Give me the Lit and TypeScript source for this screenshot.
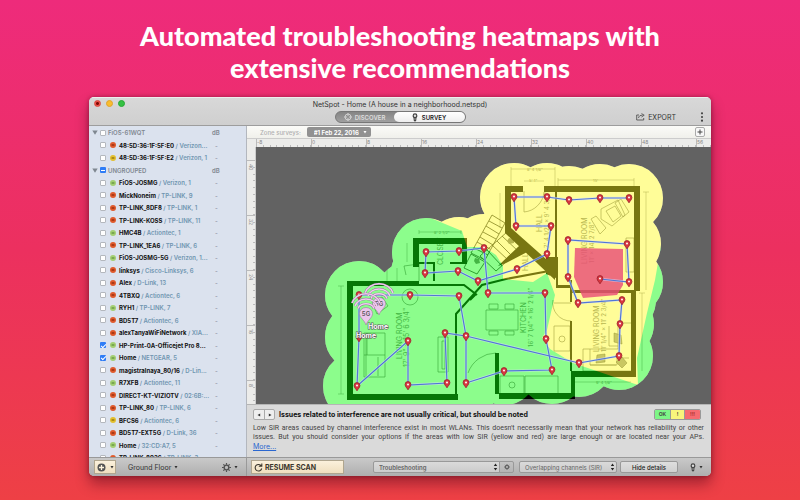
import { LitElement, html, css, svg } from "lit";
import { customElement } from "lit/decorators.js";

type Status = "bad" | "warn" | "good";
interface Network { name: string; vendor: string; status: Status; checked?: boolean }
interface Group { title: string; mixed?: boolean; items: Network[] }

const n = (name: string, vendor: string, status: Status, checked = false): Network => ({ name, vendor, status, checked });

const GROUPS: Group[] = [
  { title: "FiOS-61WQT", items: [
    n("48:5D:36:1F:5F:E0", "Verizon...", "bad"),
    n("48:5D:36:1F:5F:E2", "Verizon, 1", "warn"),
  ] },
  { title: "UNGROUPED", mixed: true, items: [
    n("FiOS-JOSMG", "Verizon, 1", "good"),
    n("MickNoneim", "TP-LINK, 9", "bad"),
    n("TP-LINK_8DF8", "TP-LINK, 1", "bad"),
    n("TP-LINK-KOSS", "TP-LINK, 11", "bad"),
    n("HMC4B", "Actiontec, 1", "good"),
    n("TP-LINK_1EA6", "TP-LINK, 6", "bad"),
    n("FiOS-JOSMG-5G", "Verizon, 1...", "good"),
    n("linksys", "Cisco-Linksys, 6", "bad"),
    n("Alex", "D-Link, 13", "bad"),
    n("4TBXQ", "Actiontec, 6", "bad"),
    n("RYH1", "TP-LINK, 7", "good"),
    n("BD5T7", "Actiontec, 6", "bad"),
    n("alexTanyaWiFiNetwork", "XIA...", "bad"),
    n("HP-Print-0A-Officejet Pro 8...", "", "good", true),
    n("Home", "NETGEAR, 5", "good", true),
    n("magistralnaya_80/16", "D-Lin...", "bad"),
    n("R7XFB", "Actiontec, 11", "good"),
    n("DIRECT-KT-VIZIOTV", "02:6B:...", "bad"),
    n("TP-LINK_80", "TP-LINK, 6", "bad"),
    n("BFCS6", "Actiontec, 6", "warn"),
    n("BD5T7-EXT5G", "D-Link, 36", "bad"),
    n("Home", "32:CD:A7, 5", "good"),
    n("TP-LINK_8926", "TP-LINK, 3", "bad"),
  ] },
];

const PINS: [number, number][] = [
  [359, 295], [410, 295], [459, 296], [466, 336], [445, 333], [447, 383], [408, 385], [408, 341], [357, 386], [359, 337],
  [466, 383], [504, 371], [552, 370], [546, 339], [545, 293], [488, 293], [484, 248], [459, 251], [426, 252], [425, 273],
  [458, 271], [478, 281], [517, 269], [547, 254], [551, 226], [516, 226], [514, 197], [547, 197], [569, 200], [600, 198],
  [629, 198], [579, 363], [619, 356], [620, 324], [622, 300], [578, 303], [568, 277], [568, 240], [627, 244], [629, 282], [600, 279],
];

const AREA = "M359 295 426 252 484 248 514 197 629 198 629 282 620 324 619 356 579 363 552 370 504 371 466 383 357 386Z";
const ROUTE =
  "M359 337V295L410 295 459 296 466 336 445 333 447 383 408 385 408 341 357 386 359 337" +
  "M466 336V383L504 371 552 370 546 339 545 293 488 293 484 248 459 251 426 252 425 273 458 271 478 281 517 269 547 254 551 226 516 226 514 197 547 197 569 200 600 198 629 198" +
  "M466 336 579 363 619 356 620 324 622 300 578 303 568 277 568 240 627 244 629 282 600 279";

const YELLOW = "M433 160 433 219 462 231 467 247 484 247 496 255 503 266 503 279 533 282 547 273 555 295 547 330 542 338 550 349 573 363 638 385 637 358 647 313 655 280 662 240 668 200 668 160Z";
const RED = "M575 248 623 249 623 285 617 295 583 298 574 277Z";

const WALLS =
  "M347 281H419V286H353V394H458V400H347Z" +
  "M413 238H467V264H462V244H419V267H413Z" +
  "M505 186H523V192H511V228L555 267V280L505 233Z" +
  "M544 186H640V291H636V377H575V399H499V393H571V371H631V293H571V290H634V192H544Z" +
  "M495 353H499V394H495Z" +
  "M498 266 519 246 533 249 506 263Z" +
  "M546 257H558V285H571V288H556V278L546 274Z";
const THIN =
  "M419 285H464L477 295M456 394V314L482 285 506 279 549 271M419 263H434V281M450 263H463M556 192V258M571 280V302M571 321V371M470 300 476 294";

const FURNITURE =
  "M364 333h21v44h-21zM366 334v42M364 355h21M367 333v22M378 357v19" +
  "M438 337h10v35h-10zM442 341h3v28h-3z" +
  "M372 302 382 297 388 306 377 314Z" +
  "M486 310h32v20h-32zM489 304h9v5h-9zM505 304h9v5h-9zM489 331h9v4h-9zM505 331h9v4h-9z" +
  "M500 376h24v18h-24zM525 376h33v18h-33zM496 353a30 30 0 0 0-28 20" +
  "M554 326h16v25h-16zM554 303h17M553 300a18 18 0 0 0 18 21" +
  "M601 209 618 200 625 215 612 226 601 219ZM615 203l6-4 8 13-6 5zM591 219l5-3 10 12-6 6zM606 211l9-5 6 10-8 6z" +
  "M626 238h8v34h-8zM524 191v21a22 22 0 0 0 20-20" +
  "M583 349h35V323h14v48h-49zM590 349v16h26M609 326v20h9M590 365h27v-7h12M406 275l-2-9 15-2v17";

const STAIRS =
  "M492 215 505 223 485 260 471 253ZM489 221l13 7M486 226l13 8M483 232l13 7M480 237l13 8M477 242l13 7M474 248l14 7" +
  "M507 232 523 247 496 271 480 256ZM502 236l16 15M497 241l15 15M492 245l16 15M487 250l15 16M471 254l14 8-8 12-13-6z";

const STAIR_MARKS = "M475 258l4 1 1 4-4 1-2-3zM509 238l5 1 0 4-5 1-2-3z";

const DIMENSIONS =
  "M341 286V394M338 286h6M338 394h6M419 232H461M419 230v4M461 230v4M407 243V262M387 265v16M397 268v14" +
  "M511 169H555M511 167v20M555 167v20M524 181H544M558 180H634M558 178v12M634 178v12M500 193V228M646 192V290M643 192h6M642 293V371M639 293h6M575 382H631M353 405H455";

const WAVES = "M-8-5.500a8.500 7 0 0 1 16 0M-11-8a11.500 10 0 0 1 22 0M-14-11a14.500 12.500 0 0 1 28 0";

@customElement("app-root")
export class AppRoot extends LitElement {
  static styles = css`
    * { box-sizing: border-box; }
    :host {
      display: block;
      box-sizing: border-box;
      min-height: 100vh;
      padding: 20px 89px 24px;
      background: linear-gradient(180deg, #ee2b7b 0%, #ec305f 50%, #ee4045 100%);
      font-family: Inter, "Liberation Sans", sans-serif;
      font-size: 7px;
      line-height: 9px;
      color: #333;
    }
    button, select { font: inherit; color: inherit; margin: 0; padding: 0; border: 0; background: none; }
    h1 {
      margin: 0 0 13px;
      color: #fff;
      font: 900 27px/32px Lato, "Open Sans", sans-serif;
      text-align: center;
      white-space: nowrap;
    }
    .window {
      border-radius: 5px;
      overflow: hidden;
      background: #d9d9d9;
      box-shadow: 0 8px 14px rgba(60, 0, 20, 0.42), 0 0 4px rgba(60, 0, 20, 0.4);
    }
    .titlebar {
      display: grid;
      grid-template-columns: 1fr auto 1fr;
      height: 29px;
      padding: 2px 5px;
      background: linear-gradient(#d8d8d8, #cfcfcf);
      border-top: 1px solid #eee;
      border-bottom: 1px solid #9d9d9d;
    }
    .lights { display: flex; gap: 5px; }
    .light { width: 7px; height: 7px; border-radius: 50%; background: #f9bd2e; border: 1px solid #e0a32c; }
    .light.close { background: radial-gradient(#7c0906 1px, #ee544c 2px); border-color: #d9453c; }
    .light.zoom { background: #35c143; border-color: #28a835; }
    .middle { display: flex; flex-direction: column; align-items: center; gap: 2px; }
    .title { color: #333; }
    .segments { display: flex; height: 12px; border-radius: 6px; background: linear-gradient(#858585, #a0a0a0); border: 1px solid #777; }
    .segments button { display: flex; align-items: center; justify-content: center; gap: 3px; width: 58px; color: #ddd; font-weight: 600; font-size: 6px; }
    .segments button.on { width: 71px; border-radius: 5px; background: linear-gradient(#fff, #eee); color: #222; gap: 4px; }
    .tools { display: flex; justify-content: flex-end; align-items: center; gap: 22px; padding-top: 11px; }
    .tools button { display: flex; align-items: center; gap: 3px; }

    .body { display: grid; grid-template-columns: 158px minmax(0, 1fr); }
    .sidebar { contain: size; overflow: hidden; background: #dbe2ee; border-right: 1px solid #b3b7be; }
    .row { display: flex; align-items: center; height: 13px; padding-left: 11px; font-size: 6px; }
    .row:nth-child(even) { height: 12px; }
    .row.group { padding-left: 3px; color: #7f8790; font-weight: 600; }
    .fold { width: 6px; height: 6px; margin-right: 2px; display: flex; align-items: center; }
    .group label { margin-left: 2px; flex: 1; }
    .box { appearance: none; flex: none; width: 6px; height: 6px; margin: 0; border: 1px solid #b4b8be; border-radius: 1px; background: #fff; }
    .box:checked, .box:indeterminate { border: 0; background: #2f7df6; display: grid; place-items: center; }
    .box:checked::after { content: ""; width: 2px; height: 4px; border: solid #fff; border-width: 0 1px 1px 0; transform: rotate(45deg); }
    .box:indeterminate::after { content: ""; width: 4px; height: 1px; background: #fff; }
    .dot { flex: none; margin: 0 3px 0 4px; }
    .name { flex: 1; color: #6f95b0; font-weight: 600; white-space: nowrap; }
    .name b { color: #111; font-weight: 700; }
    .db { flex: none; width: 34px; color: #7f8790; }
    .row:not(.group) .db { width: 33px; padding-left: 2px; }

    .zone { display: flex; align-items: center; gap: 6px; height: 13px; padding: 0 6px 0 13px; background: linear-gradient(#fbfbf8, #f0f0eb); border-bottom: 1px solid #ccc; color: #b0b0b0; }
    .zone label { font-size: 6px; font-weight: 500; }
    .chip { appearance: none; width: 64px; height: 10px; padding: 0 12px 0 7px; border-radius: 2px; background: #919191; color: #fff; font-size: 6px; font-weight: 700; }
    .chipwrap { display: grid; align-items: center; margin-right: auto; }
    .chipwrap > * { grid-area: 1 / 1; }
    .chipwrap svg { justify-self: end; margin-right: 4px; pointer-events: none; }
    .add { width: 10px; height: 10px; border: 1px solid #aaa; border-radius: 2px; background: #f8f8f8; display: grid; place-items: center; }
    .canvas { display: grid; grid-template-columns: 9px minmax(0, 1fr); grid-template-rows: 8px 257px; background: #ececea; }
    .ruler { display: flex; overflow: hidden; color: #888; font-size: 5px; line-height: 6px; }
    .ruler.h { grid-column: 2; }
    .ruler.v { flex-direction: column; padding-top: 13px; border-right: 1px solid #ccc; }
    .cell { flex: none; display: grid; }
    .cell > * { grid-area: 1 / 1; }
    .h .cell { width: 55px; border-left: 1px solid #bbb; }
    .v .cell { height: 55px; border-top: 1px solid #bbb; }
    .v .cell span { writing-mode: vertical-rl; line-height: 8px; padding-top: 3px; }
    .ticks { display: flex; align-self: end; height: 2px; }
    .ticks i { flex: 1; border-right: 1px solid #bbb; }
    .v .ticks { flex-direction: column; height: 100%; width: 2px; justify-self: end; }
    .v .ticks i { border-right: 0; border-bottom: 1px solid #bbb; }
    .map { display: block; width: 100%; height: 100%; background: #626262; font-family: Inter, sans-serif; }

    .info { padding: 4px 7px 4px 6px; min-height: 53px; background: #dadada; border-top: 1px solid #b5b5b5; }
    .infohead { display: flex; align-items: center; height: 11px; margin-bottom: 4px; }
    .steps { display: flex; height: 11px; margin-right: 4px; border: 1px solid #aaa; border-radius: 2px; background: #eee; }
    .steps button { width: 10px; display: grid; place-items: center; }
    .steps button + button { border-left: 1px solid #aaa; }
    .infohead h2 { margin: 0; flex: 1; font-size: 7px; font-weight: 700; color: #111; }
    .levels { display: flex; margin-right: 3px; border: 1px solid #999; border-radius: 2px; overflow: hidden; font-size: 5px; font-weight: 700; color: #444; text-align: center; }
    .levels span { width: 15px; height: 9px; }
    .levels .ok { background: #7df587; }
    .levels .mid { background: #f9f57c; border: solid #999; border-width: 0 1px; }
    .levels .hot { background: #f66b70; color: #a33; }
    .info p { margin: 0; font-family: Roboto, sans-serif; color: #444; text-align: justify; text-align-last: justify; }
    .info a { color: #2a67d0; display: block; text-align-last: left; font-family: Inter, sans-serif; }

    .footer { display: grid; grid-template-columns: 158px minmax(0, 1fr); height: 19px; background: linear-gradient(#c9c9c9, #aeaeae); border-top: 1px solid #999; }
    .left, .right { display: flex; align-items: center; }
    .left { padding: 0 8px 0 5px; border-right: 1px solid #999; }
    .cream { background: linear-gradient(#fbf1dc, #efdfbf); border: 1px solid #b0a68f; height: 14px; display: flex; align-items: center; }
    .plus { width: 22px; padding-left: 2px; gap: 4px; }
    .floor { margin: 0 auto 0 12px; display: flex; align-items: center; gap: 3px; }
    .gear { display: flex; align-items: center; gap: 3px; }
    .right { padding: 0 8px 0 4px; }
    .resume { width: 93px; gap: 2px; padding-left: 2px; font-weight: 700; color: #3b362c; }
    .pick { display: grid; align-items: center; height: 12px; border: 1px solid #999; border-radius: 2px; background: linear-gradient(#dadada, #cbcbcb); color: #666; font-size: 6px; }
    .pick > * { grid-area: 1 / 1; }
    .pick select { appearance: none; height: 10px; width: 100%; padding: 0 10px 0 5px; }
    .pick svg { justify-self: end; margin-right: 1px; pointer-events: none; }
    .trouble { flex: 1; margin-left: 29px; font-weight: 600; border-radius: 2px 0 0 2px; }
    .small { width: 15px; height: 12px; margin-left: -1px; margin-right: 5px; border: 1px solid #999; border-radius: 0 2px 2px 0; display: grid; place-items: center; }
    .channels { width: 98px; margin-right: 3px; }
    .hide { width: 58px; height: 12px; border: 1px solid #999; border-radius: 2px; background: linear-gradient(#dedede, #cfcfcf); font-weight: 500; font-size: 6px; color: #222; margin-right: 12px; }
    .probe { display: flex; align-items: center; gap: 3px; }
  `;

  private caret = html`<svg width="4" height="3" viewBox="0 0 4 3" aria-hidden="true"><path d="M.5 0h3L2 2.6z" fill="currentColor" /></svg>`;
  private updown = html`<svg width="5" height="8" viewBox="0 0 5 8" aria-hidden="true"><path d="M.8 3 2.5.5 4.2 3zM.8 5h3.4L2.5 7.5z" fill="#222" /></svg>`;
  private gear = (size: number) => html`<svg width=${size} height=${size} viewBox="0 0 10 10" aria-hidden="true">
    <circle cx="5" cy="5" r="2.6" fill="none" stroke="#505050" stroke-width="1.5" />
    <path d="M5 0v2M5 8v2M0 5h2M8 5h2M1.5 1.5l1.3 1.3M7.2 7.2l1.3 1.3M8.5 1.5 7.2 2.8M2.8 7.2 1.5 8.5" stroke="#505050" stroke-width="1.3" /></svg>`;
  private probe = html`<svg width="6" height="9" viewBox="0 0 6 9" aria-hidden="true">
    <path d="M3 .3a2.400 2.400 0 0 0-2.400 2.400c0 1 .5 1.500.9 2.400l.3 2.700c.2 1 2.200 1 2.400 0l.3-2.700c.4-.9.9-1.400.9-2.400A2.400 2.400 0 0 0 3 .3z" fill="#444" />
    <circle cx="3" cy="2.700" r="1.200" fill="#ddd" /><path d="M3 5v2" stroke="#bbb" stroke-width=".7" /></svg>`;

  private dot(status: Status) {
    const fill = { bad: "#e05a2b", warn: "#e3bf2e", good: "#a3cf72" }[status];
    const ink = { bad: "#84230a", warn: "#80660b", good: "#5c8a3a" }[status];
    return html`<svg class="dot" width="6" height="6" viewBox="0 0 6 6" aria-hidden="true">
      <circle cx="3" cy="3" r="3" fill=${fill} /><path d="M1.400 3h3.200M3 2.300v1.400" stroke=${ink} stroke-width=".8" /></svg>`;
  }

  private network(item: Network, id: string) {
    return html`<div class="row">
      <input class="box" type="checkbox" id=${id} .checked=${!!item.checked} />
      ${this.dot(item.status)}
      <label class="name" for=${id}><b>${item.name}</b>${item.vendor ? ` / ${item.vendor}` : ""}</label>
      <span class="db">-</span>
    </div>`;
  }

  private cell(label: string) {
    return html`<div class="cell"><span>${label}</span><div class="ticks">${Array.from({ length: 8 }, () => html`<i></i>`)}</div></div>`;
  }

  private map() {
    return html`<svg class="map" viewBox="256 147 455 257" preserveAspectRatio="xMidYMid slice" role="img" aria-label="Signal heatmap over floor plan">
      <defs>
        <clipPath id="covered"><path d=${AREA} />${PINS.map(([x, y]) => svg`<circle cx=${x} cy=${y} r="34" />`)}</clipPath>
      </defs>
      <g clip-path="url(#covered)">
        <rect x="256" y="147" width="455" height="257" fill="#fff" />
        <path d=${DIMENSIONS} fill="none" stroke="#777" stroke-width=".5" />
        <path d=${FURNITURE} fill="none" stroke="#555" stroke-width=".6" />
        <path d=${STAIRS} fill="none" stroke="#222" stroke-width=".8" />
        <path d=${STAIR_MARKS} fill="#777" />
        <circle cx="410" cy="297" r="8" fill="none" stroke="#555" stroke-width=".6" />
        <circle cx="562" cy="339" r="3" fill="none" stroke="#555" stroke-width=".6" />
        <circle cx="512" cy="385" r="3" fill="none" stroke="#555" stroke-width=".6" />
        <path d="M597 355l8-1v8l-9 1zM614 333l7 2 1 9-8-2zM616 362l6-5 5 6-5 5z" fill="#999" stroke="#444" stroke-width=".5" />
        <g fill="#777" font-size="7">
          <text transform="translate(402 359) rotate(-90)">LIVING ROOM</text>
          <text transform="translate(409 367) rotate(-90)">17' 9" × 15' 6 3/4"</text>
          <text transform="translate(443 265) rotate(-90)">CLOSET</text>
          <text transform="translate(526 333) rotate(-90)">KITCHEN</text>
          <text transform="translate(533 347) rotate(-90)" font-size="6">16' 7 1/4" × 16' 2 1/4"</text>
          <text transform="translate(587 264) rotate(-90)">LIVING ROOM</text>
          <text transform="translate(594 263) rotate(-90)" font-size="6">11' × 14' 2 7/8"</text>
          <text transform="translate(599 352) rotate(-90)">LIVING ROOM</text>
          <text transform="translate(606 352) rotate(-90)" font-size="6">11' 1/4" × 11' 2 3/4"</text>
          <text transform="translate(542 232) rotate(-90)">HALL</text>
          <text transform="translate(549 248) rotate(-90)" font-size="6">7' 4 1/2" × 9' 4 3/4"</text>
          <text transform="translate(528 271) rotate(-90)">HALL</text>
        </g>
        <g fill="#777" font-size="4">
          <text x="434" y="234">8' 2 1/2"</text>
          <text x="527" y="171">8' 4 1/8"</text>
          <text x="529" y="182">5' 1"</text>
          <text x="593" y="182">15'</text>
          <text x="596" y="384">9' 4 1/8"</text>
        </g>
      </g>
      <path d=${WALLS} /><path d=${THIN} fill="none" stroke="#000" stroke-width="2" />
      <g clip-path="url(#covered)"><g opacity=".47">
        <rect x="256" y="147" width="455" height="257" fill="#0cfa0c" />
        <path d=${YELLOW} fill="#fffa26" /></g>
        <path d=${RED} fill="#e84a78" opacity=".8" />
      </g>
      <path d=${ROUTE} fill="none" stroke="#d5dcff" stroke-width="2.400" opacity=".6" />
      <path d=${ROUTE} fill="none" stroke="#5076d6" stroke-width="1.200" />
      ${PINS.map(([x, y]) => svg`<g transform="translate(${x} ${y})">
        <path d="M0 4.800C-.7 3.300-2.900 1.700-2.900-.5a2.900 2.900 0 0 1 5.800 0C2.900 1.700.7 3.300 0 4.800z" fill="#d8353f" stroke="#98202a" stroke-width=".8" />
        <circle cy="-.5" r="1.100" fill="#ffe9e9" /></g>`)}
      ${[[379, 304], [366, 314]].map(([x, y]) => svg`<g transform="translate(${x} ${y})">
        <path d="M0 11C-1.500 6-6.500 4-6.500-.5A6.500 6 0 0 1 6.500-.5C6.500 4 1.500 6 0 11z" fill="#ecc6ec" stroke="#9d7a9f" stroke-width=".6" />
        <path d=${WAVES} fill="none" stroke="#8d6a90" stroke-width="2.200" />
        <path d=${WAVES} fill="none" stroke="#f0cdf0" stroke-width="1.500" />
        <text y="2" text-anchor="middle" font-size="6" font-weight="600" fill="#555">5G</text></g>`)}
      <g font-size="7" font-weight="700" fill="#fff" stroke="#555" stroke-width="1.200" paint-order="stroke">
        <text x="368" y="329">Home</text><text x="356" y="338">Home</text>
      </g>
    </svg>`;
  }

  render() {
    return html`
      <h1>Automated troubleshooting heatmaps with<br />extensive recommendations</h1>
      <main class="window">
        <header class="titlebar">
          <div class="lights">
            <button class="light close" aria-label="Close"></button>
            <button class="light" aria-label="Minimize"></button>
            <button class="light zoom" aria-label="Zoom"></button>
          </div>
          <div class="middle">
            <div class="title">NetSpot - Home (A house in a neighborhood.netspd)</div>
            <div class="segments">
              <button><svg width="8" height="8" viewBox="0 0 8 8" aria-hidden="true"><circle cx="4" cy="4" r="3" fill="none" stroke="#ddd" stroke-width=".8" /><path d="M4 0v3M4 5v3M0 4h3M5 4h3" stroke="#ddd" stroke-width=".8" /></svg>DISCOVER</button>
              <button class="on">${this.probe}SURVEY</button>
            </div>
          </div>
          <div class="tools">
            <button><svg width="9" height="8" viewBox="0 0 9 8" aria-hidden="true"><path d="M3 2H.7v5h7V5M2.500 5c.3-2 1.800-2.800 4-2.800M5.500.6l2.700 1.600L5.500 4" fill="none" stroke="#444" stroke-width=".8" /></svg>EXPORT</button>
            <button aria-label="More"><svg width="8" height="10" viewBox="0 0 8 10" fill="#444" aria-hidden="true"><circle cx="4" cy="1.300" r="1.100" /><circle cx="4" cy="5" r="1.100" /><circle cx="4" cy="8.700" r="1.100" /></svg></button>
          </div>
        </header>
        <div class="body">
          <aside class="sidebar">
            ${GROUPS.map((g, gi) => html`
              <div class="row group">
                <button class="fold" aria-label="Collapse ${g.title}"><svg width="6" height="5" viewBox="0 0 6 5"><path d="M.3.500h5.400L3 4.800z" fill="#7f8790" /></svg></button>
                <input class="box" type="checkbox" id="g${gi}" .indeterminate=${!!g.mixed} />
                <label for="g${gi}">${g.title}</label><span class="db">dB</span>
              </div>
              ${g.items.map((item, i) => this.network(item, `n${gi}-${i}`))}`)}
          </aside>
          <section>
            <div class="zone">
              <label for="zone">Zone surveys:</label>
              <div class="chipwrap"><select class="chip" id="zone"><option>#1 Feb 22, 2016</option></select>
                <svg width="4" height="3" viewBox="0 0 4 3"><path d="M.5 0h3L2 2.500z" fill="#fff" /></svg></div>
              <button class="add" aria-label="Add zone"><svg width="6" height="6" viewBox="0 0 6 6"><path d="M3 .5v5M.5 3h5" stroke="#444" /></svg></button>
            </div>
            <div class="canvas">
              <div class="ruler h">${["-8", "0", "8", "16", "24", "32", "40", "48", "56"].map((l) => this.cell(l))}</div>
              <div class="ruler v">${["40", "32", "24", "16", "8"].map((l) => this.cell(l))}</div>
              ${this.map()}
            </div>
            <div class="info">
              <div class="infohead">
                <div class="steps">
                  <button aria-label="Previous"><svg width="4" height="4" viewBox="0 0 4 4"><path d="M3.200.400v3.200L.5 2z" fill="#333" /></svg></button>
                  <button aria-label="Next"><svg width="4" height="4" viewBox="0 0 4 4"><path d="M.8.400v3.200L3.500 2z" fill="#333" /></svg></button>
                </div>
                <h2>Issues related to interference are not usually critical, but should be noted</h2>
                <div class="levels"><span class="ok">OK</span><span class="mid">!</span><span class="hot">!!!</span></div>
              </div>
              <p>Low SIR areas caused by channel interference exist in most WLANs. This doesn't necessarily mean that your network has reliability or other issues. But you should consider your options if the areas with low SIR (yellow and red) are large enough or are located near your APs.
                <a href="#more">More...</a></p>
            </div>
          </section>
        </div>
        <footer class="footer">
          <div class="left">
            <button class="cream plus" aria-label="Add"><svg width="9" height="9" viewBox="0 0 9 9"><circle cx="4.500" cy="4.500" r="4" fill="#555" /><path d="M4.500 2v5M2 4.500h5" stroke="#fff4dc" stroke-width="1.300" /></svg>${this.caret}</button>
            <button class="floor">Ground Floor ${this.caret}</button>
            <button class="gear" aria-label="Settings">${this.gear(9)}${this.caret}</button>
          </div>
          <div class="right">
            <button class="cream resume"><svg width="9" height="9" viewBox="0 0 9 9"><path d="M7.300 3A3.300 3.300 0 1 0 7.700 5.500M4.800 3.200h3V.4" fill="none" stroke="#3b362c" stroke-width="1.100" /></svg>RESUME SCAN</button>
            <div class="pick trouble"><select aria-label="Visualization"><option>Troubleshooting</option></select>${this.updown}</div>
            <button class="small" aria-label="Options">${this.gear(6)}</button>
            <div class="pick channels"><select aria-label="Issue"><option>Overlapping channels (SIR)</option></select>${this.updown}</div>
            <button class="hide">Hide details</button>
            <button class="probe" aria-label="Probe">${this.probe}${this.caret}</button>
          </div>
        </footer>
      </main>`;
  }
}
